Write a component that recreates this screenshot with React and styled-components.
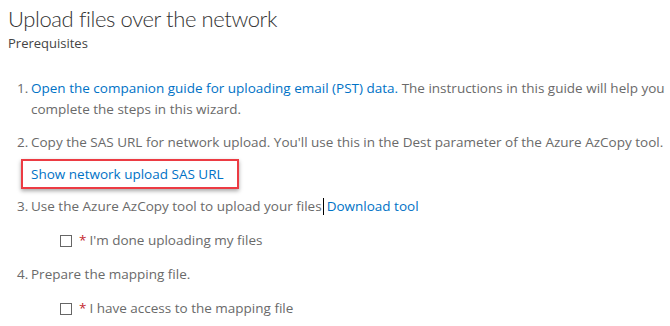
import styled, { createGlobalStyle } from "styled-components"

const Global = createGlobalStyle`
    body {
        margin: 0;
        background: #fff;
        font-family: "Open Sans", "Noto Sans", sans-serif;
    }
`

const Page = styled.div`
    width: 670px;
    height: 326px;
    overflow: hidden;
    padding: 4px 0 0 8px;
    box-sizing: border-box;
    color: #6a6a6a;
`

const Title = styled.h1`
    margin: 0;
    font-family: "Lato", "Open Sans", sans-serif;
    font-size: 22px;
    font-weight: 300;
    line-height: 30px;
    letter-spacing: -0.4px;
    color: #333;
`

const Subtitle = styled.div`
    font-size: 13px;
    line-height: 18px;
    color: #444;
`

const Steps = styled.ol`
    list-style: none;
    margin: 26px 0 0 0;
    padding: 0;
`

const Step = styled.li`
    display: flex;
    flex-direction: column;
    margin-bottom: ${p => p.$gap ?? 12}px;
`

const Row = styled.div`
    display: flex;
    font-size: 13.5px;
    line-height: 21px;
    white-space: nowrap;
`

const Num = styled.span`
    width: 23px;
    padding-left: 9px;
    box-sizing: border-box;
    flex: none;
`

const Link = styled.a`
    color: #0072c6;
    text-decoration: none;
`

const Caret = styled.span`
    display: inline-block;
    width: 1px;
    height: 17px;
    background: #000;
    vertical-align: -4px;
    margin: 0 3px 0 1px;
`

const Highlight = styled.div`
    margin: 6px 0 0 13px;
    width: 218px;
    height: 30px;
    box-sizing: border-box;
    border: 2px solid #ec3b43;
    box-shadow: 0 2px 4px rgba(0, 0, 0, 0.35);
    display: flex;
    align-items: center;
    padding-left: 8px;
    font-size: 13.5px;
    white-space: nowrap;
`

const Check = styled.label`
    display: flex;
    align-items: center;
    margin: 13px 0 0 52px;
    font-size: 13.5px;
    line-height: 21px;
    white-space: nowrap;
`

const Box = styled.span`
    width: 12px;
    height: 12px;
    border: 1px solid #666;
    box-sizing: border-box;
    margin-right: 7px;
`

const Star = styled.span`
    color: #c4262e;
    margin-right: 3px;
`

function App() {
    return (
        <Page>
            <Global />
            <Title>Upload files over the network</Title>
            <Subtitle>Prerequisites</Subtitle>
            <Steps>
                <Step>
                    <Row>
                        <Num>1.</Num>
                        <span>
                            <Link href="#">Open the companion guide for uploading email (PST) data.</Link>{" "}
                            The instructions in this guide will help you
                            <br />
                            complete the steps in this wizard.
                        </span>
                    </Row>
                </Step>
                <Step $gap={7}>
                    <Row>
                        <Num>2.</Num>
                        <span>Copy the SAS URL for network upload. You'll use this in the Dest parameter of the Azure AzCopy tool.</span>
                    </Row>
                    <Highlight>
                        <Link href="#">Show network upload SAS URL</Link>
                    </Highlight>
                </Step>
                <Step $gap={13}>
                    <Row>
                        <Num>3.</Num>
                        <span>
                            Use the Azure AzCopy tool to upload your files<Caret />
                            <Link href="#">Download tool</Link>
                        </span>
                    </Row>
                    <Check>
                        <Box />
                        <Star>*</Star>I'm done uploading my files
                    </Check>
                </Step>
                <Step>
                    <Row>
                        <Num>4.</Num>
                        <span>Prepare the mapping file.</span>
                    </Row>
                    <Check>
                        <Box />
                        <Star>*</Star>I have access to the mapping file
                    </Check>
                </Step>
            </Steps>
        </Page>
    )
}

export default App
